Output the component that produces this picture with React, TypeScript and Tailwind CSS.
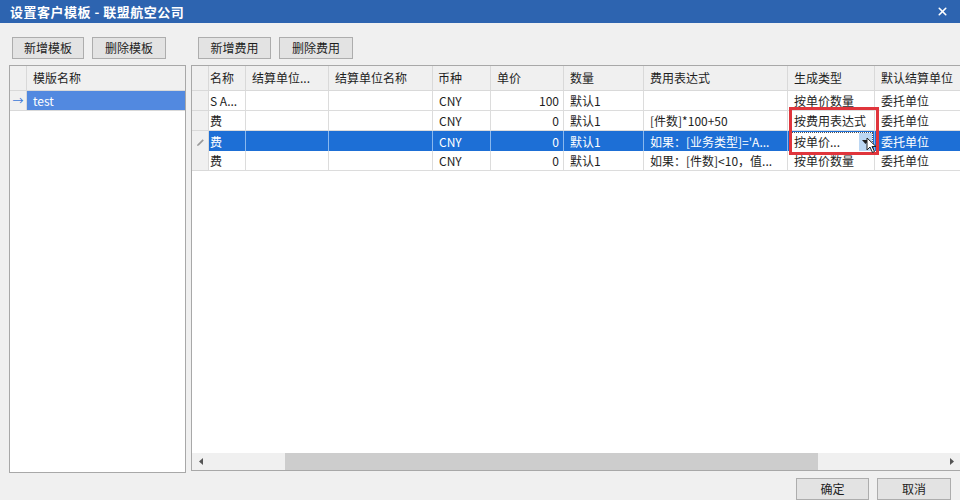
import { X } from "lucide-react";

const cols =
  "grid grid-cols-[17px_37px_83px_104px_58px_73px_80px_144px_87px_110px]";

interface FeeRow {
  name: string;
  price: string;
  expr: string;
  genType: string;
}

// grid is scrolled right a bit, so the 名称 column only shows its tail
const feeRows: FeeRow[] = [
  { name: "S A...", price: "100", expr: "", genType: "按单价数量" },
  { name: "费", price: "0", expr: "[件数]*100+50", genType: "按费用表达式" },
  { name: "费", price: "0", expr: "如果：[业务类型]='A...", genType: "按单价..." },
  { name: "费", price: "0", expr: "如果：[件数]<10，值...", genType: "按单价数量" },
];

function Btn({ label, w = "w-[73px]" }: { label: string; w?: string }) {
  return (
    <button
      className={`${w} h-[22px] border border-[#adadad] bg-[#e3e3e3] text-[12px] text-[#1e1e1e] leading-none`}
    >
      {label}
    </button>
  );
}

function Pencil() {
  return (
    <svg width="9" height="9" viewBox="0 0 9 9">
      <path d="M1 8 L1.6 6.2 L6.6 1.2 L7.8 2.4 L2.8 7.4 Z" fill="#9a9a9a" />
    </svg>
  );
}

export default function App() {
  return (
    <div
      className="w-[960px] h-[500px] overflow-hidden bg-[#f0f0f0] flex flex-col text-[12px] text-[#1e1e1e]"
      style={{ fontFamily: '"Noto Sans CJK SC", "Noto Sans", sans-serif' }}
    >
      {/* title bar */}
      <div className="h-[23px] shrink-0 bg-[#2d64b0] flex items-center justify-between pl-[10px] pr-[11px]">
        <span className="text-white text-[13px] font-bold tracking-[0.5px]">
          设置客户模板 - 联盟航空公司
        </span>
        <X size={13} strokeWidth={3} className="text-white" />
      </div>

      <div className="flex-1 flex gap-[5px] pl-[9px] pt-[14px] min-h-0">
        {/* left: templates */}
        <div className="w-[177px] flex flex-col">
          <div className="flex gap-[8px] pl-[3px]">
            <Btn label="新增模板" w="w-[72px]" />
            <Btn label="删除模板" w="w-[74px]" />
          </div>
          <div className="mt-[6px] h-[408px] border border-[#a8a8a8] bg-white flex flex-col">
            <div className="grid grid-cols-[17px_1fr] h-[25px] bg-[#f0f0f0]">
              <div className="border-r border-b border-[#d9d9d9]" />
              <div className="border-b border-[#d9d9d9] pl-[6px] flex items-center">模版名称</div>
            </div>
            <div className="grid grid-cols-[17px_1fr] h-[20px]">
              <div className="bg-[#f0f0f0] border-r border-b border-[#d9d9d9] flex items-center justify-center text-[#3a78d8] text-[11px]">
                →
              </div>
              <div className="bg-[#5289e0] text-white pl-[6px] flex items-center border-b border-[#d9d9d9]">
                test
              </div>
            </div>
          </div>
        </div>

        {/* right: fees */}
        <div className="flex-1 flex flex-col min-w-0">
          <div className="flex gap-[8px] pl-[7px]">
            <Btn label="新增费用" w="w-[73px]" />
            <Btn label="删除费用" w="w-[74px]" />
          </div>
          <div className="relative mt-[6px] h-[408px] border border-[#a8a8a8] border-r-0 bg-white flex flex-col overflow-hidden">
            {/* header */}
            <div className={`${cols} h-[25px] bg-[#f0f0f0] shrink-0`}>
              <div className="border-r border-b border-[#d9d9d9]" />
              <div className="border-r border-b border-[#d9d9d9] flex items-center pl-[1px]">名称</div>
              <div className="border-r border-b border-[#d9d9d9] flex items-center pl-[6px]">结算单位...</div>
              <div className="border-r border-b border-[#d9d9d9] flex items-center pl-[6px]">结算单位名称</div>
              <div className="border-r border-b border-[#d9d9d9] flex items-center pl-[5px]">币种</div>
              <div className="border-r border-b border-[#d9d9d9] flex items-center pl-[6px]">单价</div>
              <div className="border-r border-b border-[#d9d9d9] flex items-center pl-[6px]">数量</div>
              <div className="border-r border-b border-[#d9d9d9] flex items-center pl-[6px]">费用表达式</div>
              <div className="border-r border-b border-[#d9d9d9] flex items-center pl-[6px]">生成类型</div>
              <div className="border-b border-[#d9d9d9] flex items-center pl-[6px] whitespace-nowrap">默认结算单位</div>
            </div>

            {feeRows.map((r, i) => {
              const sel = i === 2;
              const cell = sel
                ? "bg-[#1d6fd6] text-white border-r border-b border-[#8ab8ee]"
                : "bg-white border-r border-b border-[#dcdcdc]";
              return (
                <div key={i} className={`${cols} h-[20px] shrink-0`}>
                  <div className="bg-[#f0f0f0] border-r border-b border-[#d9d9d9] flex items-center justify-center">
                    {sel && <Pencil />}
                  </div>
                  <div className={`${cell} flex items-center pl-[1px] whitespace-nowrap`}>{r.name}</div>
                  <div className={cell} />
                  <div className={cell} />
                  <div className={`${cell} flex items-center pl-[6px]`}>CNY</div>
                  <div className={`${cell} flex items-center justify-end pr-[4px]`}>{r.price}</div>
                  <div className={`${cell} flex items-center pl-[6px]`}>默认1</div>
                  <div className={`${cell} flex items-center pl-[6px] whitespace-nowrap`}>{r.expr}</div>
                  {sel ? (
                    <div className={`${cell} p-[1px]`}>
                      <div className="h-full bg-white text-[#1e1e1e] border border-dotted border-[#555] flex items-center">
                        <span className="flex-1 pl-[4px] whitespace-nowrap">{r.genType}</span>
                        <span className="w-[13px] h-full bg-[#bcd7f3] flex items-center justify-center">
                          <svg width="7" height="4" viewBox="0 0 7 4">
                            <path d="M0 0 H7 L3.5 4 Z" fill="#1e1e1e" />
                          </svg>
                        </span>
                      </div>
                    </div>
                  ) : (
                    <div className={`${cell} flex items-center pl-[6px] whitespace-nowrap`}>{r.genType}</div>
                  )}
                  <div className={`${cell} flex items-center pl-[6px] whitespace-nowrap`}>委托单位</div>
                </div>
              );
            })}

            <div className="flex-1" />

            {/* horizontal scrollbar */}
            <div className="h-[17px] shrink-0 bg-[#f0f0f0] flex items-center">
              <div className="w-[17px] flex items-center justify-center">
                <svg width="4" height="7" viewBox="0 0 4 7">
                  <path d="M4 0 V7 L0 3.5 Z" fill="#555" />
                </svg>
              </div>
              <div className="flex-1 h-full flex">
                <div className="w-[76px]" />
                <div className="w-[533px] h-full bg-[#cdcdcd]" />
                <div className="flex-1" />
              </div>
              <div className="w-[17px] flex items-center justify-center">
                <svg width="4" height="7" viewBox="0 0 4 7">
                  <path d="M0 0 V7 L4 3.5 Z" fill="#555" />
                </svg>
              </div>
            </div>

            {/* highlight box over the 生成类型 column */}
            <div className="absolute left-[597px] top-[41px] w-[90px] h-[48px] border-[3px] border-[#e0353c]" />
            {/* mouse pointer */}
            <svg className="absolute left-[674px] top-[71px]" width="12" height="17" viewBox="0 0 12 17">
              <path d="M1 1 L1 13 L4 10 L6.5 15.5 L8.5 14.5 L6 9.5 L10 9.5 Z" fill="white" stroke="#222" strokeWidth="1" />
            </svg>
          </div>
          <div className="flex justify-end gap-[8px] pr-[9px] mt-[7px]">
            <Btn label="确定" w="w-[73px]" />
            <Btn label="取消" w="w-[74px]" />
          </div>
        </div>
      </div>
    </div>
  );
}
